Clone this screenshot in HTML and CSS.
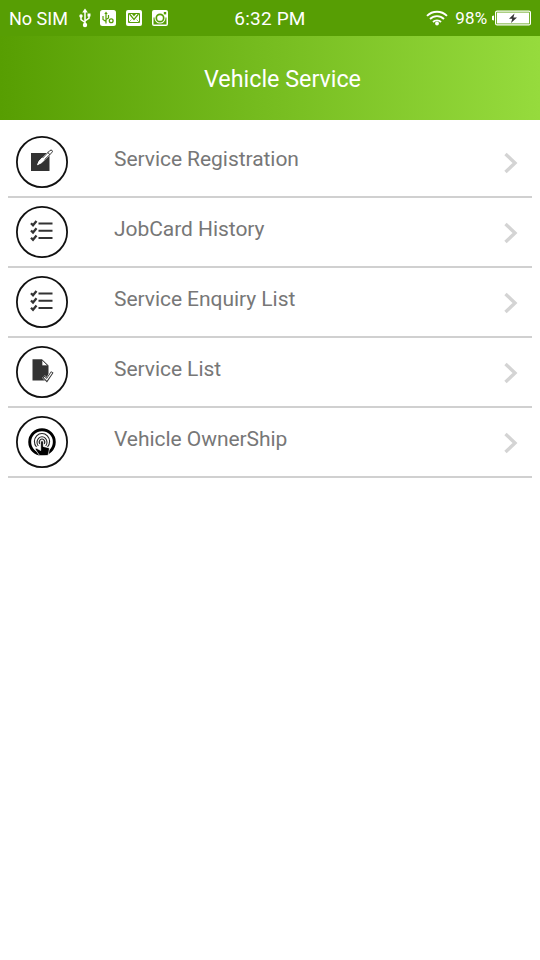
FILE: index.html
```html
<!DOCTYPE html>
<html lang="en">
<head>
  <meta charset="UTF-8" />
  <meta name="viewport" content="width=device-width, initial-scale=1.0"/>
  <title>Vehicle Service</title>
  <link rel="stylesheet" href="styles.css">
</head>
<body>

  <div class="status-bar">
    <div class="status-left">
      <span class="carrier">No SIM</span>
      <svg class="usb" width="12" height="20" viewBox="0 0 12 20" fill="none" stroke="#fff" stroke-width="1.500">
        <path d="M6 3v14M6 14.500L2 11.500V8M6 13l4-3V6.500"/>
        <path d="M6 .5l2.800 4H3.200z" fill="#fff" stroke="none"/>
        <circle cx="6" cy="17" r="2.200" fill="#fff" stroke="none"/>
        <circle cx="2" cy="8" r="1.700" fill="#fff" stroke="none"/>
        <path d="M8.500 5.500h3v3h-3z" fill="#fff" stroke="none"/>
      </svg>
      <svg width="16" height="16" viewBox="0 0 16 16" fill="none" stroke="#579e04">
        <rect width="16" height="16" rx="2.500" fill="#fff" stroke="none"/>
        <path d="M6 3v10.500M6 11.500L3 9.500V6M6 9.500l2.500-1.500V5" stroke-width="1.200"/>
        <path d="M6 1.500l1.700 2.500H4.300z" fill="#579e04" stroke="none"/>
        <circle cx="11.200" cy="10.800" r="1.900" stroke-width="1.300"/>
      </svg>
      <svg width="16" height="16" viewBox="0 0 16 16" fill="none" stroke="#579e04">
        <rect width="16" height="16" rx="2" fill="#fff" stroke="none"/>
        <path d="M2.500 3.500h11v9h-11z" stroke-width="1"/>
        <path d="M3.500 4L8 9.500 12.500 4" stroke-width="1.200"/>
        <path d="M3 12l2.500-2.500M13 12l-2.500-2.500" stroke-width=".6"/>
        <path d="M6 4h4L8 6.500z" fill="#579e04" stroke="none"/>
      </svg>
      <svg width="16" height="16" viewBox="0 0 16 16" fill="none">
        <rect width="16" height="16" rx="2" fill="#fff"/>
        <path d="M1.500 7.500H14.500v7h-13z" fill="#579e04"/>
        <circle cx="8" cy="8" r="5.500" fill="#fff"/>
        <circle cx="8" cy="8" r="3.700" fill="#fff" stroke="#579e04" stroke-width="1.700"/>
        <path d="M11.800 2h2.400v2.400h-2.400z" fill="#579e04"/>
      </svg>
    </div>
    <span class="time">6:32 PM</span>
    <div class="status-right">
      <svg class="wifi" width="22" height="16" viewBox="0 0 22 16" fill="none" stroke="#fff" stroke-width="1.900">
        <path d="M1 5.800a14.200 14.200 0 0 1 20 0M4 9a10 10 0 0 1 14 0M7 12a5.700 5.700 0 0 1 8 0"/>
        <circle cx="11" cy="13.500" r="1.900" fill="#fff" stroke="none"/>
      </svg>
      <span class="percent">98%</span>
      <svg width="39" height="16" viewBox="0 0 39 16">
        <path d="M2 5.500v5a2.500 2.500 0 0 1 0-5z" fill="#fff"/>
        <rect x="3.600" y="1.100" width="34.800" height="13.800" rx="1.500" fill="none" stroke="#fff" stroke-width="1.200"/>
        <rect x="5" y="2.500" width="32" height="11" fill="#fff"/>
        <path d="M22.500 3.500l-5.500 5.200h3.300l-1.300 4.300 6-5.600h-3.600z" fill="#333"/>
      </svg>
    </div>
  </div>

  <header class="header">
    <h1>Vehicle Service</h1>
  </header>

  <ul class="menu">
    <li class="menu-item">
      <svg class="icon" viewBox="0 0 52 52">
        <circle class="ring" cx="26" cy="26" r="25.100"/>
        <path d="M15 17h18.500v18H15z" fill="#333"/>
        <path d="M21.500 28.700l1.700-3.700L33.500 14.500q1.800-1.400 2.900-.2 1 1.300-.4 2.700L25.500 26.700z" fill="#fff" stroke="#fff" stroke-width="1"/>
        <path d="M26.500 22l7.200-7.300q1.500-1.200 2.400-.2.900 1-.3 2.200L28.500 23.800" fill="none" stroke="#333" stroke-width="1"/>
        <path d="M31.800 16.500l2.200 2.200" stroke="#333" stroke-width="1"/>
      </svg>
      <span class="label">Service Registration</span>
      <svg class="arrow" viewBox="0 0 16 22"><path d="M2.500 2l9.500 9-9.500 9"/></svg>
    </li>
    <li class="menu-item">
      <svg class="icon" viewBox="0 0 52 52">
        <circle class="ring" cx="26" cy="26" r="25.100"/>
        <path class="lines" d="M22.500 17.500h14M22.500 24.800h14M22.500 32h14"/>
        <path class="checks" d="M15 17.300l2 2 3.500-4.300M15 24.500l2 2 3.500-4.300M15 31.700l2 2 3.500-4.300"/>
      </svg>
      <span class="label">JobCard History</span>
      <svg class="arrow" viewBox="0 0 16 22"><path d="M2.500 2l9.500 9-9.500 9"/></svg>
    </li>
    <li class="menu-item">
      <svg class="icon" viewBox="0 0 52 52">
        <circle class="ring" cx="26" cy="26" r="25.100"/>
        <path class="lines" d="M22.500 17.500h14M22.500 24.800h14M22.500 32h14"/>
        <path class="checks" d="M15 17.300l2 2 3.500-4.300M15 24.500l2 2 3.500-4.300M15 31.700l2 2 3.500-4.300"/>
      </svg>
      <span class="label">Service Enquiry List</span>
      <svg class="arrow" viewBox="0 0 16 22"><path d="M2.500 2l9.500 9-9.500 9"/></svg>
    </li>
    <li class="menu-item">
      <svg class="icon" viewBox="0 0 52 52">
        <circle class="ring" cx="26" cy="26" r="25.100"/>
        <path d="M16.500 13.300h9.500l6.500 6.200V34.500h-16z" fill="#333"/>
        <path d="M26 14v5.700h5.800z" fill="#fff" stroke="#333" stroke-width=".7"/>
        <path d="M27.500 30.500l3.300 3.500 5.500-8" fill="none" stroke="#fff" stroke-width="3.800"/>
        <path d="M27.500 30.500l3.300 3.500 5.500-8" fill="none" stroke="#333" stroke-width="3"/>
        <path d="M28.200 31.200l2.600 2.700 5-7.300" fill="none" stroke="#fff" stroke-width="1.200"/>
      </svg>
      <span class="label">Service List</span>
      <svg class="arrow" viewBox="0 0 16 22"><path d="M2.500 2l9.500 9-9.500 9"/></svg>
    </li>
    <li class="menu-item">
      <svg class="icon" viewBox="0 0 52 52">
        <circle class="ring" cx="26" cy="26" r="25.100"/>
        <circle cx="26" cy="26" r="12.300" fill="none" stroke="#000" stroke-width="2.900"/>
        <g fill="none" stroke="#222" stroke-width="1.100">
          <path d="M24 28a2.700 3 0 1 1 4 0"/>
          <path d="M22.300 30a5 5.500 0 1 1 7.400 0"/>
          <path d="M20.500 31a7.600 8 0 1 1 11 0"/>
        </g>
        <path d="M24.700 25.500q1.300-1.600 2.600 0v5l5.200 1.200q1.200.5.800 2L32 39.500h-8.500l-4.500-6.500q1-1.500 3 0l2.700 1.500z" fill="#000" stroke="#fff" stroke-width=".7"/>
      </svg>
      <span class="label">Vehicle OwnerShip</span>
      <svg class="arrow" viewBox="0 0 16 22"><path d="M2.500 2l9.500 9-9.500 9"/></svg>
    </li>
  </ul>

</body>
</html>
```
FILE: styles.css
```css
body {
  margin: 0;
  padding: 0;
  background: #fff;
  font-family: Roboto, sans-serif;
}

svg {
  display: block;
  flex: none;
}

.status-bar {
  display: grid;
  grid-template-columns: 1fr auto 1fr;
  align-items: center;
  height: 36px;
  padding: 0 9px;
  background: #579e04;
  color: #fff;
  font-size: 18px;
  line-height: 34px;
  white-space: nowrap;
}

.status-left {
  display: flex;
  align-items: center;
  gap: 10px;
}

.carrier {
  width: 60px;
  padding-top: 2px;
}

.usb {
  margin-right: -1px;
}

.time {
  padding-top: 2px;
  font-size: 19px;
  letter-spacing: 0.2px;
}

.status-right {
  display: flex;
  align-items: center;
  justify-content: flex-end;
}

.percent {
  margin: 0 4.5px 0 7px;
  font-size: 17px;
  letter-spacing: 0.2px;
}

.header {
  height: 84px;
  background: linear-gradient(to right, #579e02, #96db3d);
  color: #fff;
}

.header h1 {
  margin: 0;
  padding-left: 25px;
  text-align: center;
  font-size: 23.3px;
  font-weight: 400;
  line-height: 87px;
}

.menu {
  margin: 0;
  padding: 8px;
  list-style: none;
}

.menu-item {
  display: flex;
  align-items: center;
  box-sizing: border-box;
  height: 70px;
  padding: 0 13px 0 8px;
  border-bottom: 2px solid #d0d0d0;
}

.icon {
  width: 52px;
  height: 52px;
}

.ring {
  fill: none;
  stroke: #111;
  stroke-width: 1.8;
}

.lines {
  fill: none;
  stroke: #333;
  stroke-width: 2;
}

.checks {
  fill: none;
  stroke: #333;
  stroke-width: 2.3;
}

.label {
  flex: 1;
  padding: 0 0 6px 46px;
  color: #777;
  font-size: 21px;
  letter-spacing: -0.05px;
}

.arrow {
  width: 16px;
  height: 22px;
  margin-top: 2px;
  fill: none;
  stroke: #d4d4d4;
  stroke-width: 3.4;
}
```
